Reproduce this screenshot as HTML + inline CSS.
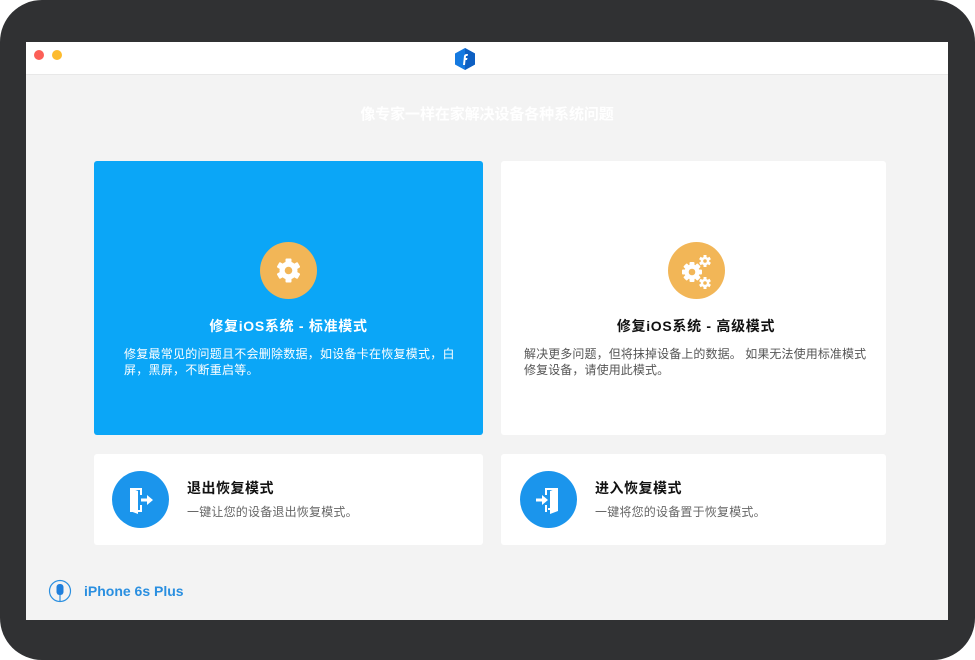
<!DOCTYPE html>
<html><head><meta charset="utf-8"><style>
*{margin:0;padding:0;box-sizing:border-box}
body{width:975px;height:634px;background:#fff;overflow:hidden;position:relative;font-family:"Liberation Sans","Noto Sans CJK SC",sans-serif}
.frame{position:absolute;left:0;top:0;width:975px;height:660px;background:#303133;border-radius:42px}
.win{position:absolute;left:26px;top:42px;width:922px;height:578px;background:#f3f3f3;overflow:hidden}
.tb{position:absolute;left:0;top:0;width:922px;height:33px;background:#fff;border-bottom:1px solid #e8e8e8}
.dot{position:absolute;top:8px;width:10px;height:10px;border-radius:50%}
.abs{position:absolute}
.card{position:absolute;border-radius:3px;background:#fff}
.t{position:absolute;text-align:center;white-space:nowrap}
.circ{position:absolute;border-radius:50%}
</style></head><body>
<div class="frame"></div>
<div class="win">
 <div class="tb">
  <div class="dot" style="left:8px;background:#fc5f57"></div>
  <div class="dot" style="left:26px;background:#fdbb2e"></div>
  <svg class="abs" style="left:428px;top:5px" width="22" height="24" viewBox="0 0 22 24"><path d="M11 1 L21 6.5 V17.5 L11 23 L1 17.5 V6.5Z" fill="#1479e0"/><path d="M11 1 L21 6.5 V17.5 L11 23Z" fill="#0d5fc2"/><path d="M9 18 L10 9 Q10.5 7 13 7 L14 7 L13.5 9 L12 9 L11.8 11 L13.5 11 L13 13 L11.5 13 L11 18Z" fill="#fff"/></svg>
 </div>
 <div class="t" style="left:0;width:922px;top:61px;font-size:15px;font-weight:bold;color:#fff;letter-spacing:-0.1px">像专家一样在家解决设备各种系统问题</div>

 <div class="card" style="left:68px;top:119px;width:389px;height:274px;background:#0ba6f7"></div>
 <div class="circ" style="left:234px;top:200px;width:57px;height:57px;background:#f2b657"></div>
 <svg class="abs" style="left:248px;top:214px" width="29" height="29" viewBox="-14.5 -14.5 29 29"><g fill="#fff"><rect x="-3" y="-12" width="6" height="24" rx="1"/><rect x="-3" y="-12" width="6" height="24" rx="1" transform="rotate(60)"/><rect x="-3" y="-12" width="6" height="24" rx="1" transform="rotate(120)"/><circle r="9"/></g><circle r="3.8" fill="#f2b657"/></svg>
 <div class="t" style="left:68px;width:389px;top:274px;font-size:14px;font-weight:bold;color:#fff;letter-spacing:0.7px">修复iOS系统 - 标准模式</div>
 <div class="t" style="left:98px;width:345px;top:304px;font-size:12px;color:#fff;text-align:left;white-space:normal;line-height:16px;letter-spacing:0.25px">修复最常见的问题且不会删除数据，如设备卡在恢复模式，白屏，黑屏，不断重启等。</div>

 <div class="card" style="left:475px;top:119px;width:385px;height:274px"></div>
 <div class="circ" style="left:642px;top:200px;width:57px;height:57px;background:#f2b657"></div>
 <svg class="abs" style="left:650px;top:210px" width="42" height="38" viewBox="0 0 42 38"><g transform="translate(16,20)" fill="#fff"><rect x="-2.5" y="-10" width="5" height="20" rx="1"/><rect x="-2.5" y="-10" width="5" height="20" rx="1" transform="rotate(45)"/><rect x="-2.5" y="-10" width="5" height="20" rx="1" transform="rotate(90)"/><rect x="-2.5" y="-10" width="5" height="20" rx="1" transform="rotate(135)"/><circle r="7.5"/><circle r="3.3" fill="#f2b657"/></g><g transform="translate(29,9)" fill="#fff"><rect x="-1.5" y="-6" width="3" height="12"/><rect x="-1.5" y="-6" width="3" height="12" transform="rotate(60)"/><rect x="-1.5" y="-6" width="3" height="12" transform="rotate(120)"/><circle r="4.3"/><circle r="1.8" fill="#f2b657"/></g><g transform="translate(29,31)" fill="#fff"><rect x="-1.5" y="-6" width="3" height="12"/><rect x="-1.5" y="-6" width="3" height="12" transform="rotate(60)"/><rect x="-1.5" y="-6" width="3" height="12" transform="rotate(120)"/><circle r="4.3"/><circle r="1.8" fill="#f2b657"/></g></svg>
 <div class="t" style="left:475px;width:390px;top:274px;font-size:14px;font-weight:bold;color:#111;letter-spacing:0.7px">修复iOS系统 - 高级模式</div>
 <div class="t" style="left:498px;width:350px;top:304px;font-size:12px;color:#555;text-align:left;white-space:normal;line-height:16px;letter-spacing:0.1px">解决更多问题，但将抹掉设备上的数据。 如果无法使用标准模式修复设备，请使用此模式。</div>

 <div class="card" style="left:68px;top:412px;width:389px;height:91px"></div>
 <div class="circ" style="left:86px;top:429px;width:57px;height:57px;background:#1b95ec"></div>
 <svg class="abs" style="left:99px;top:442px" width="32" height="32" viewBox="0 0 32 32"><path d="M5 4 H17 V11 H15 V6 H10 V26 H15 V21 H17 V28 H5Z" fill="#fff"/><path d="M5 4 L13 7 V30 L5 27Z" fill="#fff"/><path d="M16 14.5 H22 V11 L28 16 L22 21 V17.5 H16Z" fill="#fff"/></svg>
 <div class="abs" style="left:161px;top:436px;font-size:14px;font-weight:bold;color:#111;letter-spacing:0.5px">退出恢复模式</div>
 <div class="abs" style="left:161px;top:461px;font-size:12px;color:#666;letter-spacing:0.2px">一键让您的设备退出恢复模式。</div>

 <div class="card" style="left:475px;top:412px;width:385px;height:91px"></div>
 <div class="circ" style="left:494px;top:429px;width:57px;height:57px;background:#1b95ec"></div>
 <svg class="abs" style="left:506px;top:442px" width="32" height="32" viewBox="0 0 32 32"><path d="M13 4 H26 V26 H16 V24 H24 V6 H15 V11 H13Z" fill="#fff"/><path d="M13 21 H15 V28 H13Z" fill="#fff"/><path d="M26 4 L18 7 V30 L26 27Z" fill="#fff"/><path d="M4 14.5 H10 V11 L16 16 L10 21 V17.5 H4Z" fill="#fff"/></svg>
 <div class="abs" style="left:569px;top:436px;font-size:14px;font-weight:bold;color:#111;letter-spacing:0.5px">进入恢复模式</div>
 <div class="abs" style="left:569px;top:461px;font-size:12px;color:#666;letter-spacing:0.2px">一键将您的设备置于恢复模式。</div>

 <svg class="abs" style="left:22px;top:537px" width="24" height="24" viewBox="0 0 24 24"><circle cx="12" cy="12" r="10.5" fill="none" stroke="#2a8fe0" stroke-width="1.2"/><rect x="8.5" y="5" width="7" height="11" rx="3" fill="#1f7fdc"/><path d="M12 16 V22" stroke="#2a8fe0" stroke-width="1.2"/></svg>
 <div class="abs" style="left:58px;top:541px;font-size:14px;font-weight:bold;color:#2a8fe0">iPhone 6s Plus</div>
</div>
</body></html>
